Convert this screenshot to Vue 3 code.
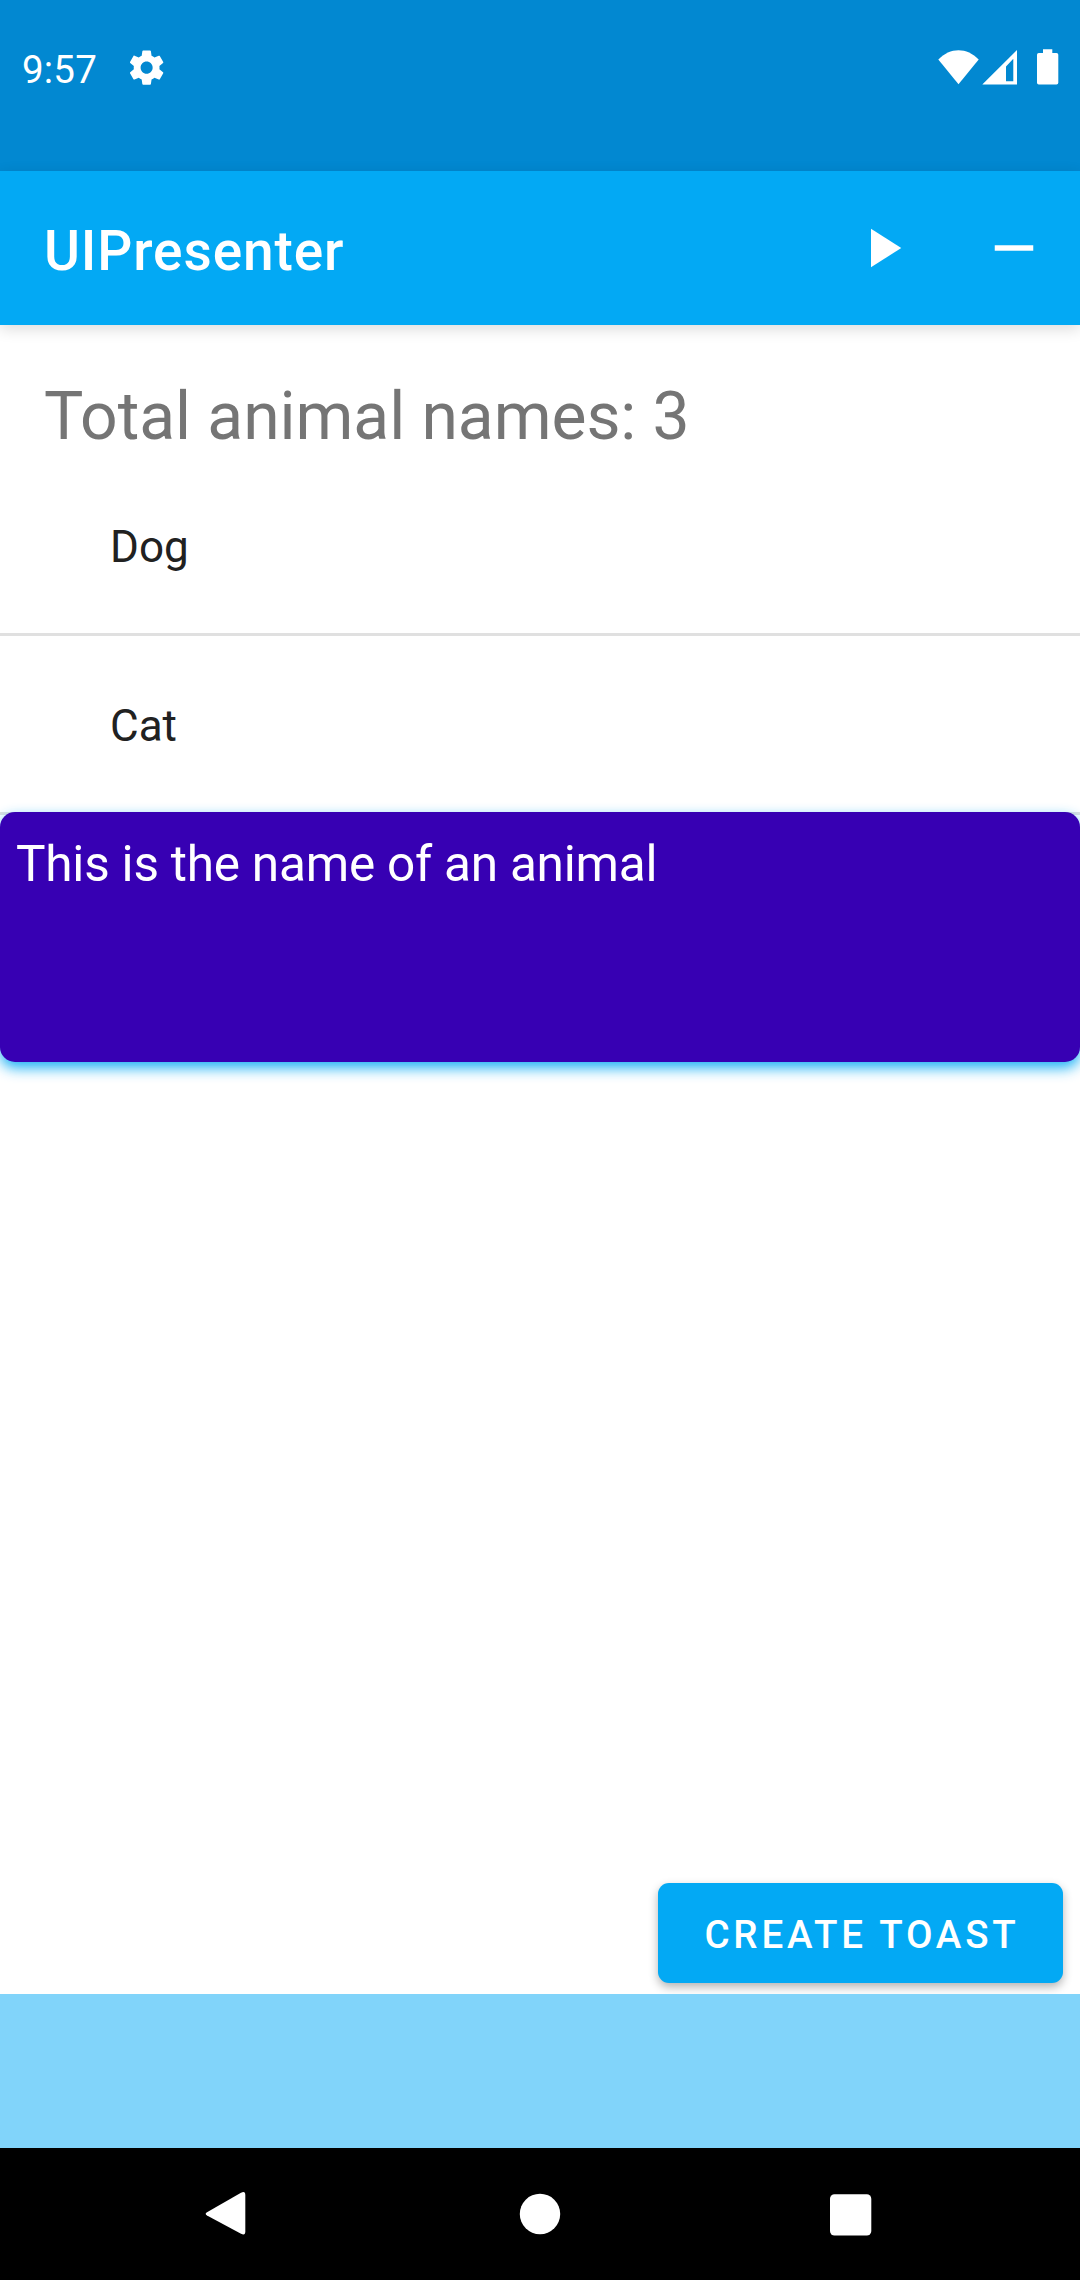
<script setup>
const animals = ['Dog', 'Cat']
</script>

<template>
  <div class="screen">
    <header class="status">
      <span class="clock">9:57</span>
      <svg class="gear" viewBox="0 0 24 24"><path d="M19.43 12.98c.04-.32.07-.64.07-.98s-.03-.66-.07-.98l2.11-1.65c.19-.15.24-.42.12-.64l-2-3.46c-.12-.22-.39-.3-.61-.22l-2.49 1c-.52-.4-1.08-.73-1.69-.98l-.38-2.65C14.46 2.18 14.25 2 14 2h-4c-.25 0-.46.18-.49.42l-.38 2.65c-.61.25-1.17.59-1.69.98l-2.49-1c-.23-.09-.49 0-.61.22l-2 3.46c-.13.22-.07.49.12.64l2.11 1.65c-.04.32-.07.65-.07.98s.03.66.07.98l-2.11 1.65c-.19.15-.24.42-.12.64l2 3.46c.12.22.39.3.61.22l2.49-1c.52.4 1.08.73 1.69.98l.38 2.65c.03.24.24.42.49.42h4c.25 0 .46-.18.49-.42l.38-2.65c.61-.25 1.17-.59 1.69-.98l2.49 1c.23.09.49 0 .61-.22l2-3.46c.12-.22.07-.49-.12-.64l-2.11-1.65zM12 15.5c-1.93 0-3.5-1.57-3.5-3.5s1.57-3.5 3.5-3.5 3.5 1.57 3.5 3.5-1.57 3.5-3.5 3.5z" /></svg>
      <svg class="indicators" viewBox="0 0 122 38">
        <path d="M0.3 11.5C12-1 29-1 40.7 11.5L20.5 36.3z" />
        <path fill-rule="evenodd" d="M44.3 36.5L79 2V36.5zM68 18.5V33.2H75.3V10.8z" />
        <path d="M105 1.3h9.3V5h4.2a1.8 1.8 0 0 1 1.8 1.8v27.9a1.8 1.8 0 0 1-1.8 1.8h-17.7a1.8 1.8 0 0 1-1.8-1.8V6.8a1.8 1.8 0 0 1 1.8-1.8h4.2z" />
      </svg>
    </header>

    <div class="toolbar">
      <h1 class="title">UIPresenter</h1>
      <svg class="action" viewBox="0 0 24 24"><path d="M8 5v14l11-7z" /></svg>
      <svg class="action" viewBox="0 0 24 24"><path d="M19 13H5v-2h14z" /></svg>
    </div>

    <main class="content">
      <p class="total">Total animal names: 3</p>
      <ul class="list">
        <li v-for="name in animals" :key="name" class="row">{{ name }}</li>
      </ul>
      <div class="tooltip">This is the name of an animal</div>
      <button class="toast">CREATE TOAST</button>
    </main>

    <div class="footer"></div>
    <nav class="nav">
      <svg viewBox="0 0 66 66"><path d="M10 31.2L44 11.8Q48.300 9.500 48.300 14V50.500Q48.300 55 44 52.700L10 34.500Q7.400 32.800 10 31.200z" /></svg>
      <svg viewBox="0 0 66 66"><circle cx="33" cy="33" r="20.2" /></svg>
      <svg viewBox="0 0 66 66"><rect x="13" y="13.2" width="41.3" height="41.3" rx="4.5" /></svg>
    </nav>
  </div>
</template>

<style>
body { margin: 0; }
</style>

<style scoped>
.screen {
  width: 1080px;
  height: 2280px;
  display: flex;
  flex-direction: column;
  overflow: hidden;
  background: #fff;
  font-family: Roboto, sans-serif;
}
svg { display: block; fill: #fff; flex: none; }
.status {
  height: 171px;
  flex: none;
  display: flex;
  align-items: flex-start;
  background: #0288d1;
}
.clock {
  box-sizing: border-box;
  width: 125.5px;
  padding: 47px 0 0 22px;
  color: #fff;
  font-size: 38.5px;
  line-height: 46px;
  letter-spacing: 0.2px;
}
.gear { width: 41.25px; height: 41.25px; margin-top: 46.7px; }
.indicators { width: 122px; height: 38px; margin: 48px 20px 0 auto; }
.toolbar {
  position: relative;
  z-index: 1;
  height: 154px;
  flex: none;
  box-sizing: border-box;
  display: flex;
  align-items: center;
  gap: 66px;
  padding: 0 33px 0 44px;
  background: #03a9f4;
  box-shadow: 0 4px 14px rgba(0, 0, 0, .14);
}
.title {
  flex: 1;
  margin: 5px 0 0;
  color: #fff;
  font-size: 55px;
  font-weight: 500;
  line-height: 66px;
  letter-spacing: 0.88px;
}
.action { width: 66px; height: 66px; }
.content { flex: 1; display: flex; flex-direction: column; }
.total {
  height: 132px;
  box-sizing: border-box;
  margin: 0;
  padding: 53px 44px 0;
  color: #757575;
  font-size: 66px;
  line-height: 78px;
  letter-spacing: -0.07px;
}
.list { margin: 0; padding: 0; list-style: none; }
.row {
  height: 179px;
  box-sizing: border-box;
  padding: 64px 0 0 110px;
  border-bottom: 3px solid #e0e0e0;
  color: #212121;
  font-size: 44px;
  line-height: 52px;
}
.tooltip {
  position: relative;
  height: 250px;
  box-sizing: border-box;
  margin-top: -3px;
  padding: 22px 16px;
  border-radius: 15px;
  background: #3700b3;
  box-shadow: 0 6px 14px rgba(3, 169, 244, .9);
  color: #fff;
  font-size: 49.5px;
  line-height: 60px;
  letter-spacing: -0.22px;
}
.toast {
  align-self: flex-end;
  width: 405px;
  height: 100px;
  margin: auto 17px 11px 0;
  padding: 4px 0 0 3px;
  border: 0;
  border-radius: 11px;
  background: #03a9f4;
  box-shadow: 0 4px 10px rgba(0, 0, 0, .3);
  color: #fff;
  font: 500 38.5px/46px Roboto, sans-serif;
  letter-spacing: 3.8px;
}
.footer { position: relative; height: 154px; flex: none; background: #81d4fa; }
.nav {
  height: 132px;
  flex: none;
  display: flex;
  justify-content: center;
  align-items: center;
  gap: 244px;
  background: #000;
}
.nav svg { width: 66px; height: 66px; }
</style>
